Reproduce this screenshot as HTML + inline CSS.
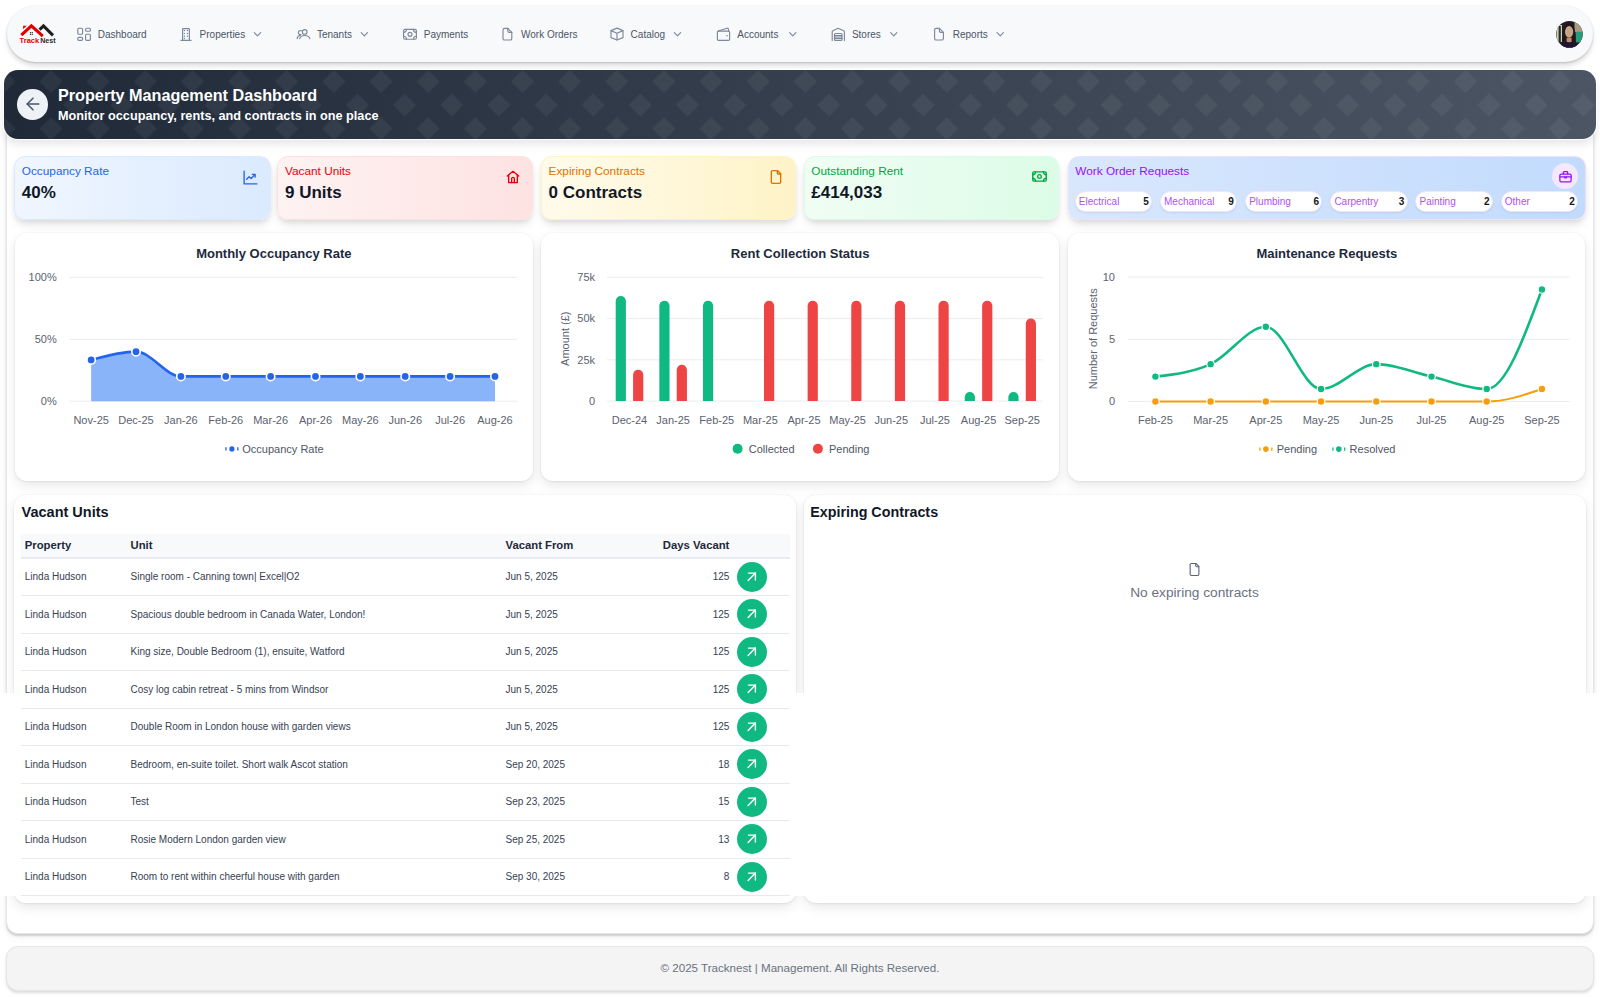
<!DOCTYPE html>
<html><head><meta charset="utf-8"><title>Property Management Dashboard</title>
<style>
*{box-sizing:border-box;margin:0;padding:0}
html,body{width:1600px;height:997px;overflow:hidden;background:#fff;font-family:"Liberation Sans",sans-serif;color:#1f2937}
#nav{position:absolute;left:7px;top:6px;width:1586px;height:56px;border-radius:28px;background:#f8f9fb;box-shadow:0 4px 5px rgba(0,0,0,.13),0 1px 2px rgba(0,0,0,.12),0 0 0 1px rgba(0,0,0,.025)}
#banner{position:absolute;left:4px;top:69.5px;width:1592px;height:69px;border-radius:14px;background:linear-gradient(90deg,#1f2937,#4b5563);overflow:hidden;box-shadow:0 0 0 1px #fff,0 5px 9px rgba(0,0,0,.10)}
#cont{position:absolute;left:6px;top:120px;width:1588px;height:814px;background:#fff;border:1px solid #e6e6e6;border-radius:12px;box-shadow:0 2px 2px rgba(0,0,0,.16),0 3px 8px rgba(0,0,0,.06)}
.card{position:absolute;background:#fff;border-radius:12px;box-shadow:0 5px 12px rgba(0,0,0,.085),0 1px 3px rgba(0,0,0,.05),0 0 0 1px rgba(0,0,0,.018)}
.stat{position:absolute;top:156px;height:63.5px;border-radius:11px;box-shadow:0 6px 10px -2px rgba(0,0,0,.12),0 2px 4px rgba(0,0,0,.05)}
#footer{position:absolute;left:6px;top:946px;width:1588px;height:45px;border-radius:12px;background:#f4f4f4;border:1px solid #e6e6e6;box-shadow:0 2px 3px rgba(0,0,0,.14)}
#mask{position:absolute;left:0;top:693px;width:1600px;height:203px;background:#fff}
.ic{position:absolute;overflow:visible}
</style></head><body>
<div id="nav"></div><div id="cont"></div><div id="banner"><svg width="1592" height="70" style="position:absolute;left:0;top:0">
<defs><pattern id="dia" patternUnits="userSpaceOnUse" width="47.15" height="47.15" x="-0.15" y="11.5"><g fill="rgba(255,255,255,0.055)"><path d="M-11.50 0.00L0.00 -11.50L11.50 0.00L0.00 11.50Z"/><path d="M35.65 0.00L47.15 -11.50L58.65 0.00L47.15 11.50Z"/><path d="M-11.50 47.15L0.00 35.65L11.50 47.15L0.00 58.65Z"/><path d="M35.65 47.15L47.15 35.65L58.65 47.15L47.15 58.65Z"/><path d="M12.07 23.57L23.57 12.07L35.08 23.57L23.57 35.08Z"/></g></pattern></defs>
<rect width="1592" height="70" fill="url(#dia)"/></svg></div><div class="stat" style="left:14px;width:256.5px;background:linear-gradient(90deg,#eff6ff,#dbeafe);border:1px solid #dbeafe"></div><div class="stat" style="left:277.2px;width:255.5px;background:linear-gradient(90deg,#fef2f2,#fee2e2);border:1px solid #fee2e2"></div><div class="stat" style="left:540.8px;width:255.7px;background:linear-gradient(90deg,#fffbeb,#fef3c7);border:1px solid #fef3c7"></div><div class="stat" style="left:803.5px;width:255.6px;background:linear-gradient(90deg,#f0fdf4,#dcfce7);border:1px solid #dcfce7"></div><div class="stat" style="left:1067.5px;width:518px;background:linear-gradient(90deg,#d9e7fd,#c2dbfd);border:1px solid #ede0fb"></div><div class="card" style="left:15px;top:232.5px;width:517.5px;height:248px"></div><div class="card" style="left:541px;top:232.5px;width:518px;height:248px"></div><div class="card" style="left:1067.5px;top:232.5px;width:517.5px;height:248px"></div><div class="card" style="left:14px;top:494.5px;width:781.5px;height:408.5px"></div><div class="card" style="left:803.5px;top:494.5px;width:782px;height:408.5px"></div><div id="footer"></div>
<svg class="ic" style="left:0;top:0" width="70" height="50" viewBox="0 0 70 50">
<path d="M21.3 35.1 L31.4 25.9 L42.8 36.1" fill="none" stroke="#e10000" stroke-width="3.1" stroke-linejoin="miter" stroke-miterlimit="4"/>
<polygon points="23.1,25.8 26.7,25.8 23.1,29.3" fill="#e10000"/>
<path d="M39.6 29.7 L43.5 25.9 L53.0 35.3" fill="none" stroke="#1f1f1f" stroke-width="3.1" stroke-linejoin="miter"/>
<g fill="#3a3a3a"><rect x="29.9" y="32" width="1.2" height="1.2"/><rect x="31.7" y="32" width="1.2" height="1.2"/><rect x="29.9" y="33.8" width="1.2" height="1.2"/><rect x="31.7" y="33.8" width="1.2" height="1.2"/></g>
<text x="19.6" y="42.9" font-size="8" font-weight="700" fill="#e10000" textLength="19.6" lengthAdjust="spacingAndGlyphs">Track</text>
<text x="40.2" y="42.9" font-size="8" font-weight="700" fill="#2b2b2b" textLength="15.4" lengthAdjust="spacingAndGlyphs">Nest</text>
</svg><svg class="ic" style="left:0;top:0" width="1100" height="60" viewBox="0 0 1100 60" fill="none" stroke="#7d889c" stroke-width="1.15" stroke-linecap="round" stroke-linejoin="round"><rect x="77.8" y="28.2" width="4.8" height="6" rx="1"/><rect x="77.8" y="37.4" width="4.8" height="2.9" rx="1"/><rect x="85.6" y="28.2" width="4.8" height="3" rx="1"/><rect x="85.6" y="34.2" width="4.8" height="6.1" rx="1"/><path d="M182.6 40.4 V29.2 Q182.6 28.6 183.2 28.6 H188.8 Q189.4 28.6 189.4 29.2 V40.4"/><path d="M181 40.4 H191"/><g stroke-width="1.5"><path d="M184.4 30.6h.01M187.5 30.6h.01M184.4 33.4h.01M187.5 33.4h.01M184.4 36.2h.01M187.5 36.2h.01M184.4 38.6h.01"/></g><path d="M254.35 32.7 L257.50 35.8 L260.65 32.7"/><circle cx="304.7" cy="31.9" r="2.3"/><path d="M299.7 38.7 Q300.4 35.5 304.7 35.5 Q309 35.5 309.8 38.7"/><path d="M301.3 30.85 A2 2 0 1 0 301.0 34.5"/><path d="M297.1 38.7 Q297.5 35.9 300.4 35.3"/><path d="M361.20 32.7 L364.35 35.8 L367.50 32.7"/><rect x="403.6" y="29.3" width="12.8" height="9.95" rx="1.4"/><circle cx="410" cy="34.3" r="2"/><path d="M403.6 32.4 A3 3 0 0 0 406.6 29.4 M413.4 29.4 A3 3 0 0 0 416.4 32.4 M416.4 36.2 A3 3 0 0 0 413.4 39.2 M406.6 39.2 A3 3 0 0 0 403.6 36.2"/><path d="M507.80 28.4 H504.60 Q503.00 28.4 503.00 30 V38.4 Q503.00 40 504.60 40 H510.20 Q511.80 40 511.80 38.4 V32.4 Z"/><path d="M507.80 28.4 V31.1 Q507.80 32.4 509.10 32.4 H511.80"/><path d="M617 28.1 L623 30.6 V37.6 L617 40 L611 37.6 V30.6 Z"/><path d="M611 30.6 L617 33.2 L623 30.6 M617 33.2 V40"/><path d="M674.35 32.7 L677.50 35.8 L680.65 32.7"/><rect x="717.4" y="31.1" width="12.2" height="9.3" rx="1.2"/><path d="M718.2 31 L727.1 28.2 Q728.2 27.9 728.4 29 L728.6 31"/><path d="M727.0 35.8h.01" stroke-width="1.6"/><path d="M789.60 32.7 L792.75 35.8 L795.90 32.7"/><path d="M832.2 40.6 V31.7 Q832.2 31 832.9 30.7 L838.2 28.3 L843.7 30.7 Q844.4 31 844.4 31.7 V40.6"/><rect x="834.5" y="33.5" width="7.5" height="6.9" rx="1"/><path d="M834.5 35.6 H842 M834.5 38.3 H842"/><rect x="834.5" y="35.6" width="7.5" height="2.7" fill="#717d92" fill-opacity="0.35" stroke="none"/><path d="M890.60 32.7 L893.75 35.8 L896.90 32.7"/><path d="M939.40 28.4 H936.20 Q934.60 28.4 934.60 30 V38.4 Q934.60 40 936.20 40 H941.80 Q943.40 40 943.40 38.4 V32.4 Z"/><path d="M939.40 28.4 V31.1 Q939.40 32.4 940.70 32.4 H943.40"/><path d="M997.10 32.7 L1000.25 35.8 L1003.40 32.7"/></svg><div style="position:absolute;left:97.75px;top:28.14px;font-size:10px;line-height:13px;font-weight:400;color:#4a5565;white-space:nowrap;">Dashboard</div><div style="position:absolute;left:199.60px;top:28.14px;font-size:10px;line-height:13px;font-weight:400;color:#4a5565;white-space:nowrap;">Properties</div><div style="position:absolute;left:316.90px;top:28.14px;font-size:10px;line-height:13px;font-weight:400;color:#4a5565;white-space:nowrap;">Tenants</div><div style="position:absolute;left:423.75px;top:28.14px;font-size:10px;line-height:13px;font-weight:400;color:#4a5565;white-space:nowrap;">Payments</div><div style="position:absolute;left:521.00px;top:28.14px;font-size:10px;line-height:13px;font-weight:400;color:#4a5565;white-space:nowrap;">Work Orders</div><div style="position:absolute;left:630.60px;top:28.14px;font-size:10px;line-height:13px;font-weight:400;color:#4a5565;white-space:nowrap;">Catalog</div><div style="position:absolute;left:737.25px;top:28.14px;font-size:10px;line-height:13px;font-weight:400;color:#4a5565;white-space:nowrap;">Accounts</div><div style="position:absolute;left:851.90px;top:28.14px;font-size:10px;line-height:13px;font-weight:400;color:#4a5565;white-space:nowrap;">Stores</div><div style="position:absolute;left:952.75px;top:28.14px;font-size:10px;line-height:13px;font-weight:400;color:#4a5565;white-space:nowrap;">Reports</div><svg class="ic" style="left:1554px;top:19px" width="31" height="31" viewBox="0 0 31 31">
<defs><clipPath id="av"><circle cx="15.4" cy="15.25" r="13.3"/></clipPath></defs>
<circle cx="15.4" cy="15.25" r="14.1" fill="#fff"/>
<g clip-path="url(#av)">
<rect width="31" height="31" fill="#241d2a"/>
<rect x="2.5" y="6" width="5.5" height="17" fill="#cfd0b0"/>
<rect x="4.6" y="7" width="2.2" height="16" fill="#233030"/>
<rect x="20.5" y="2" width="10" height="11" fill="#a89a80"/>
<rect x="21.5" y="12.8" width="9" height="10.5" fill="#2a9c7e"/>
<path d="M8.5 31 C8.5 12 9.5 3.5 15 3.5 C20.5 3.5 22 12 22 31Z" fill="#21171d"/>
<ellipse cx="15.1" cy="12.9" rx="4.1" ry="5.9" fill="#c9a587"/>
<path d="M12.6 18.8 h5 v4 q-2.5 1.5 -5 0z" fill="#c08a6c"/>
<path d="M3 31 C6 24 10 23.5 15 23.5 C20 23.5 24 24 27 31Z" fill="#1c1632"/>
</g></svg><div style="position:absolute;left:17.2px;top:89px;width:30.6px;height:30.6px;border-radius:50%;background:#eef2f7"></div><svg class="ic" style="left:22.60px;top:94.30px" width="20" height="20" viewBox="0 0 24 24" fill="none" stroke="#475569" stroke-width="1.8" stroke-linecap="round" stroke-linejoin="round" ><path d="m12 19-7-7 7-7"/><path d="M19 12H5"/></svg><div style="position:absolute;left:58.00px;top:84.59px;font-size:16.2px;line-height:21px;font-weight:700;color:#fff;white-space:nowrap;">Property Management Dashboard</div><div style="position:absolute;left:58.00px;top:108.10px;font-size:12.7px;line-height:17px;font-weight:700;color:#fff;white-space:nowrap;">Monitor occupancy, rents, and contracts in one place</div><div style="position:absolute;left:21.80px;top:163.71px;font-size:11.8px;line-height:15px;font-weight:400;color:#2563eb;white-space:nowrap;">Occupancy Rate</div><div style="position:absolute;left:21.80px;top:181.81px;font-size:17px;line-height:22px;font-weight:700;color:#101828;white-space:nowrap;">40%</div><svg class="ic" style="left:241.50px;top:168.50px" width="17" height="17" viewBox="0 0 24 24" fill="none" stroke="#2563eb" stroke-width="1.9" stroke-linecap="round" stroke-linejoin="round" ><path d="M3 3v18h18"/><path d="m6.5 14.5 3.5-3.5 3 2.5 5-5.5"/><path d="M14.5 7.5h4v4"/></svg><div style="position:absolute;left:285.00px;top:163.71px;font-size:11.8px;line-height:15px;font-weight:400;color:#e7000b;white-space:nowrap;">Vacant Units</div><div style="position:absolute;left:285.00px;top:181.81px;font-size:17px;line-height:22px;font-weight:700;color:#101828;white-space:nowrap;">9 Units</div><svg class="ic" style="left:504.50px;top:168.80px" width="16" height="16" viewBox="0 0 24 24" fill="none" stroke="#e7000b" stroke-width="2" stroke-linecap="round" stroke-linejoin="round" ><path d="M3.5 10.5 12 3.5l8.5 7"/><path d="M5.5 9v11.5h13V9"/><path d="M10 20.5v-6a2 2 0 0 1 4 0v6"/></svg><div style="position:absolute;left:548.60px;top:163.71px;font-size:11.8px;line-height:15px;font-weight:400;color:#e17100;white-space:nowrap;">Expiring Contracts</div><div style="position:absolute;left:548.60px;top:181.81px;font-size:17px;line-height:22px;font-weight:700;color:#101828;white-space:nowrap;">0 Contracts</div><svg class="ic" style="left:767.50px;top:168.80px" width="16" height="16" viewBox="0 0 24 24" fill="none" stroke="#e17100" stroke-width="2" stroke-linecap="round" stroke-linejoin="round" ><path d="M14.5 2.5H7a2 2 0 0 0-2 2v15a2 2 0 0 0 2 2h10a2 2 0 0 0 2-2V7Z"/><path d="M14 2.5v3.5a1.5 1.5 0 0 0 1.5 1.5H19"/></svg><div style="position:absolute;left:811.30px;top:163.71px;font-size:11.8px;line-height:15px;font-weight:400;color:#00a63e;white-space:nowrap;">Outstanding Rent</div><div style="position:absolute;left:811.30px;top:181.81px;font-size:17px;line-height:22px;font-weight:700;color:#101828;white-space:nowrap;">£414,033</div><svg class="ic" style="left:1030.50px;top:168.20px" width="17" height="17" viewBox="0 0 24 24" fill="none" stroke="#00a63e" stroke-width="1.9" stroke-linecap="round" stroke-linejoin="round" ><rect x="2.5" y="5.5" width="19" height="13" rx="1.5"/><circle cx="12" cy="12" r="2.6"/><path d="M2.5 9.5a4 4 0 0 0 4-4M17.5 5.5a4 4 0 0 0 4 4M2.5 14.5a4 4 0 0 1 4 4M17.5 18.5a4 4 0 0 1 4-4"/></svg><div style="position:absolute;left:1075.30px;top:163.71px;font-size:11.8px;line-height:15px;font-weight:400;color:#9810fa;white-space:nowrap;">Work Order Requests</div><div style="position:absolute;left:1552px;top:163.4px;width:26px;height:26px;border-radius:50%;background:#f3e8ff"></div><svg class="ic" style="left:1557.50px;top:168.90px" width="15" height="15" viewBox="0 0 24 24" fill="none" stroke="#9810fa" stroke-width="2" stroke-linecap="round" stroke-linejoin="round" ><rect x="3" y="8" width="18" height="12.5" rx="2"/><path d="M8.5 8V5.5a1.5 1.5 0 0 1 1.5-1.5h4a1.5 1.5 0 0 1 1.5 1.5V8"/><path d="M3 12.5h18"/><path d="M10.5 12.5v1.5h3v-1.5"/></svg><div style="position:absolute;left:1074.50px;top:190.6px;width:77.6px;height:21.2px;border-radius:11px;background:#fff;border:1px solid #f1e6fd;box-shadow:0 1px 2px rgba(0,0,0,.08)"></div><div style="position:absolute;left:1078.80px;top:194.63px;font-size:10px;line-height:13px;font-weight:400;color:#b150f5;white-space:nowrap;">Electrical</div><div style="position:absolute;left:548.70px;width:600px;text-align:right;top:194.63px;font-size:10px;line-height:13px;font-weight:700;color:#101828;white-space:nowrap;">5</div><div style="position:absolute;left:1159.70px;top:190.6px;width:77.6px;height:21.2px;border-radius:11px;background:#fff;border:1px solid #f1e6fd;box-shadow:0 1px 2px rgba(0,0,0,.08)"></div><div style="position:absolute;left:1164.00px;top:194.63px;font-size:10px;line-height:13px;font-weight:400;color:#b150f5;white-space:nowrap;">Mechanical</div><div style="position:absolute;left:633.90px;width:600px;text-align:right;top:194.63px;font-size:10px;line-height:13px;font-weight:700;color:#101828;white-space:nowrap;">9</div><div style="position:absolute;left:1244.90px;top:190.6px;width:77.6px;height:21.2px;border-radius:11px;background:#fff;border:1px solid #f1e6fd;box-shadow:0 1px 2px rgba(0,0,0,.08)"></div><div style="position:absolute;left:1249.20px;top:194.63px;font-size:10px;line-height:13px;font-weight:400;color:#b150f5;white-space:nowrap;">Plumbing</div><div style="position:absolute;left:719.10px;width:600px;text-align:right;top:194.63px;font-size:10px;line-height:13px;font-weight:700;color:#101828;white-space:nowrap;">6</div><div style="position:absolute;left:1330.10px;top:190.6px;width:77.6px;height:21.2px;border-radius:11px;background:#fff;border:1px solid #f1e6fd;box-shadow:0 1px 2px rgba(0,0,0,.08)"></div><div style="position:absolute;left:1334.40px;top:194.63px;font-size:10px;line-height:13px;font-weight:400;color:#b150f5;white-space:nowrap;">Carpentry</div><div style="position:absolute;left:804.30px;width:600px;text-align:right;top:194.63px;font-size:10px;line-height:13px;font-weight:700;color:#101828;white-space:nowrap;">3</div><div style="position:absolute;left:1415.30px;top:190.6px;width:77.6px;height:21.2px;border-radius:11px;background:#fff;border:1px solid #f1e6fd;box-shadow:0 1px 2px rgba(0,0,0,.08)"></div><div style="position:absolute;left:1419.60px;top:194.63px;font-size:10px;line-height:13px;font-weight:400;color:#b150f5;white-space:nowrap;">Painting</div><div style="position:absolute;left:889.50px;width:600px;text-align:right;top:194.63px;font-size:10px;line-height:13px;font-weight:700;color:#101828;white-space:nowrap;">2</div><div style="position:absolute;left:1500.50px;top:190.6px;width:77.6px;height:21.2px;border-radius:11px;background:#fff;border:1px solid #f1e6fd;box-shadow:0 1px 2px rgba(0,0,0,.08)"></div><div style="position:absolute;left:1504.80px;top:194.63px;font-size:10px;line-height:13px;font-weight:400;color:#b150f5;white-space:nowrap;">Other</div><div style="position:absolute;left:974.70px;width:600px;text-align:right;top:194.63px;font-size:10px;line-height:13px;font-weight:700;color:#101828;white-space:nowrap;">2</div>
<svg style="position:absolute;left:0;top:0" width="1600" height="997" viewBox="0 0 1600 997" font-family='"Liberation Sans", sans-serif'>
<text x="273.80" y="258.20" font-size="13" font-weight="700" fill="#1e293b" text-anchor="middle" >Monthly Occupancy Rate</text><line x1="69.2" x2="517" y1="277.3" y2="277.3" stroke="#ececec" stroke-width="1"/><line x1="69.2" x2="517" y1="339.25" y2="339.25" stroke="#ececec" stroke-width="1"/><line x1="69.2" x2="517" y1="401.2" y2="401.2" stroke="#ececec" stroke-width="1"/><text x="56.70" y="281.20" font-size="11" font-weight="400" fill="#5b6270" text-anchor="end" >100%</text><text x="56.70" y="343.15" font-size="11" font-weight="400" fill="#5b6270" text-anchor="end" >50%</text><text x="56.70" y="405.10" font-size="11" font-weight="400" fill="#5b6270" text-anchor="end" >0%</text><text x="91.15" y="423.50" font-size="11" font-weight="400" fill="#5b6270" text-anchor="middle" >Nov-25</text><text x="136.02" y="423.50" font-size="11" font-weight="400" fill="#5b6270" text-anchor="middle" >Dec-25</text><text x="180.89" y="423.50" font-size="11" font-weight="400" fill="#5b6270" text-anchor="middle" >Jan-26</text><text x="225.76" y="423.50" font-size="11" font-weight="400" fill="#5b6270" text-anchor="middle" >Feb-26</text><text x="270.63" y="423.50" font-size="11" font-weight="400" fill="#5b6270" text-anchor="middle" >Mar-26</text><text x="315.50" y="423.50" font-size="11" font-weight="400" fill="#5b6270" text-anchor="middle" >Apr-26</text><text x="360.37" y="423.50" font-size="11" font-weight="400" fill="#5b6270" text-anchor="middle" >May-26</text><text x="405.24" y="423.50" font-size="11" font-weight="400" fill="#5b6270" text-anchor="middle" >Jun-26</text><text x="450.11" y="423.50" font-size="11" font-weight="400" fill="#5b6270" text-anchor="middle" >Jul-26</text><text x="494.98" y="423.50" font-size="11" font-weight="400" fill="#5b6270" text-anchor="middle" >Aug-26</text><path d="M91.15,359.94 C106.11,355.79 121.06,351.64 136.02,351.64 C150.98,351.64 165.93,376.42 180.89,376.42 C195.85,376.42 210.80,376.42 225.76,376.42 C240.72,376.42 255.67,376.42 270.63,376.42 C285.59,376.42 300.54,376.42 315.50,376.42 C330.46,376.42 345.41,376.42 360.37,376.42 C375.33,376.42 390.28,376.42 405.24,376.42 C420.20,376.42 435.15,376.42 450.11,376.42 C465.07,376.42 480.02,376.42 494.98,376.42 L494.98,401.2 L91.15,401.2 Z" fill="#3b82f6" fill-opacity="0.6"/><path d="M91.15,359.94 C106.11,355.79 121.06,351.64 136.02,351.64 C150.98,351.64 165.93,376.42 180.89,376.42 C195.85,376.42 210.80,376.42 225.76,376.42 C240.72,376.42 255.67,376.42 270.63,376.42 C285.59,376.42 300.54,376.42 315.50,376.42 C330.46,376.42 345.41,376.42 360.37,376.42 C375.33,376.42 390.28,376.42 405.24,376.42 C420.20,376.42 435.15,376.42 450.11,376.42 C465.07,376.42 480.02,376.42 494.98,376.42" fill="none" stroke="#2563eb" stroke-width="2.6"/><circle cx="91.15" cy="359.94" r="4.2" fill="#2563eb" stroke="#fff" stroke-width="1.6"/><circle cx="136.02" cy="351.64" r="4.2" fill="#2563eb" stroke="#fff" stroke-width="1.6"/><circle cx="180.89" cy="376.42" r="4.2" fill="#2563eb" stroke="#fff" stroke-width="1.6"/><circle cx="225.76" cy="376.42" r="4.2" fill="#2563eb" stroke="#fff" stroke-width="1.6"/><circle cx="270.63" cy="376.42" r="4.2" fill="#2563eb" stroke="#fff" stroke-width="1.6"/><circle cx="315.50" cy="376.42" r="4.2" fill="#2563eb" stroke="#fff" stroke-width="1.6"/><circle cx="360.37" cy="376.42" r="4.2" fill="#2563eb" stroke="#fff" stroke-width="1.6"/><circle cx="405.24" cy="376.42" r="4.2" fill="#2563eb" stroke="#fff" stroke-width="1.6"/><circle cx="450.11" cy="376.42" r="4.2" fill="#2563eb" stroke="#fff" stroke-width="1.6"/><circle cx="494.98" cy="376.42" r="4.2" fill="#2563eb" stroke="#fff" stroke-width="1.6"/><circle cx="231.9" cy="448.9" r="2.6" fill="#2563eb"/><path d="M226.13 447.25 A6.0 6.0 0 0 0 226.13 450.55 M237.67 447.25 A6.0 6.0 0 0 1 237.67 450.55" fill="none" stroke="#2563eb" stroke-width="1.3"/><text x="242.30" y="452.70" font-size="11" font-weight="400" fill="#4f5663" text-anchor="start" >Occupancy Rate</text><text x="800.20" y="258.20" font-size="13" font-weight="700" fill="#1e293b" text-anchor="middle" >Rent Collection Status</text><line x1="607" x2="1043.2" y1="277.3" y2="277.3" stroke="#ececec" stroke-width="1"/><line x1="607" x2="1043.2" y1="318.57" y2="318.57" stroke="#ececec" stroke-width="1"/><line x1="607" x2="1043.2" y1="359.83" y2="359.83" stroke="#ececec" stroke-width="1"/><line x1="607" x2="1043.2" y1="401.1" y2="401.1" stroke="#ececec" stroke-width="1"/><text x="595.10" y="281.20" font-size="11" font-weight="400" fill="#5b6270" text-anchor="end" >75k</text><text x="595.10" y="322.47" font-size="11" font-weight="400" fill="#5b6270" text-anchor="end" >50k</text><text x="595.10" y="363.73" font-size="11" font-weight="400" fill="#5b6270" text-anchor="end" >25k</text><text x="595.10" y="405.00" font-size="11" font-weight="400" fill="#5b6270" text-anchor="end" >0</text><text x="0.00" y="0.00" font-size="11" font-weight="400" fill="#5b6270" text-anchor="middle" transform="translate(568.6 338.7) rotate(-90)">Amount (£)</text><text x="629.50" y="423.50" font-size="11" font-weight="400" fill="#5b6270" text-anchor="middle" >Dec-24</text><path d="M615.70,401.1 L615.70,301.05 A5.1,5.1 0 0 1 625.90,301.05 L625.90,401.1 Z" fill="#10b981"/><path d="M633.10,401.1 L633.10,374.84 A5.1,5.1 0 0 1 643.30,374.84 L643.30,401.1 Z" fill="#ef4444"/><text x="673.13" y="423.50" font-size="11" font-weight="400" fill="#5b6270" text-anchor="middle" >Jan-25</text><path d="M659.33,401.1 L659.33,305.84 A5.1,5.1 0 0 1 669.53,305.84 L669.53,401.1 Z" fill="#10b981"/><path d="M676.73,401.1 L676.73,369.80 A5.1,5.1 0 0 1 686.93,369.80 L686.93,401.1 Z" fill="#ef4444"/><text x="716.76" y="423.50" font-size="11" font-weight="400" fill="#5b6270" text-anchor="middle" >Feb-25</text><path d="M702.96,401.1 L702.96,305.84 A5.1,5.1 0 0 1 713.16,305.84 L713.16,401.1 Z" fill="#10b981"/><text x="760.39" y="423.50" font-size="11" font-weight="400" fill="#5b6270" text-anchor="middle" >Mar-25</text><path d="M763.99,401.1 L763.99,305.84 A5.1,5.1 0 0 1 774.19,305.84 L774.19,401.1 Z" fill="#ef4444"/><text x="804.02" y="423.50" font-size="11" font-weight="400" fill="#5b6270" text-anchor="middle" >Apr-25</text><path d="M807.62,401.1 L807.62,305.84 A5.1,5.1 0 0 1 817.82,305.84 L817.82,401.1 Z" fill="#ef4444"/><text x="847.65" y="423.50" font-size="11" font-weight="400" fill="#5b6270" text-anchor="middle" >May-25</text><path d="M851.25,401.1 L851.25,305.84 A5.1,5.1 0 0 1 861.45,305.84 L861.45,401.1 Z" fill="#ef4444"/><text x="891.28" y="423.50" font-size="11" font-weight="400" fill="#5b6270" text-anchor="middle" >Jun-25</text><path d="M894.88,401.1 L894.88,305.84 A5.1,5.1 0 0 1 905.08,305.84 L905.08,401.1 Z" fill="#ef4444"/><text x="934.91" y="423.50" font-size="11" font-weight="400" fill="#5b6270" text-anchor="middle" >Jul-25</text><path d="M938.51,401.1 L938.51,305.84 A5.1,5.1 0 0 1 948.71,305.84 L948.71,401.1 Z" fill="#ef4444"/><text x="978.54" y="423.50" font-size="11" font-weight="400" fill="#5b6270" text-anchor="middle" >Aug-25</text><path d="M964.74,401.1 L964.74,397.12 A5.1,5.1 0 0 1 974.94,397.12 L974.94,401.1 Z" fill="#10b981"/><path d="M982.14,401.1 L982.14,305.84 A5.1,5.1 0 0 1 992.34,305.84 L992.34,401.1 Z" fill="#ef4444"/><text x="1022.17" y="423.50" font-size="11" font-weight="400" fill="#5b6270" text-anchor="middle" >Sep-25</text><path d="M1008.37,401.1 L1008.37,397.12 A5.1,5.1 0 0 1 1018.57,397.12 L1018.57,401.1 Z" fill="#10b981"/><path d="M1025.77,401.1 L1025.77,323.67 A5.1,5.1 0 0 1 1035.97,323.67 L1035.97,401.1 Z" fill="#ef4444"/><circle cx="737.6" cy="448.8" r="5" fill="#10b981"/><text x="748.70" y="452.70" font-size="11" font-weight="400" fill="#4f5663" text-anchor="start" >Collected</text><circle cx="817.9" cy="448.8" r="5" fill="#ef4444"/><text x="829.00" y="452.70" font-size="11" font-weight="400" fill="#4f5663" text-anchor="start" >Pending</text><text x="1326.90" y="258.20" font-size="13" font-weight="700" fill="#1e293b" text-anchor="middle" >Maintenance Requests</text><line x1="1127.7" x2="1569.6" y1="277.0" y2="277.0" stroke="#ececec" stroke-width="1"/><line x1="1127.7" x2="1569.6" y1="339.25" y2="339.25" stroke="#ececec" stroke-width="1"/><line x1="1127.7" x2="1569.6" y1="401.5" y2="401.5" stroke="#ececec" stroke-width="1"/><text x="1115.00" y="280.90" font-size="11" font-weight="400" fill="#5b6270" text-anchor="end" >10</text><text x="1115.00" y="343.15" font-size="11" font-weight="400" fill="#5b6270" text-anchor="end" >5</text><text x="1115.00" y="405.40" font-size="11" font-weight="400" fill="#5b6270" text-anchor="end" >0</text><text x="0.00" y="0.00" font-size="11" font-weight="400" fill="#5b6270" text-anchor="middle" transform="translate(1096.6 338.8) rotate(-90)">Number of Requests</text><text x="1155.40" y="423.50" font-size="11" font-weight="400" fill="#5b6270" text-anchor="middle" >Feb-25</text><text x="1210.62" y="423.50" font-size="11" font-weight="400" fill="#5b6270" text-anchor="middle" >Mar-25</text><text x="1265.84" y="423.50" font-size="11" font-weight="400" fill="#5b6270" text-anchor="middle" >Apr-25</text><text x="1321.06" y="423.50" font-size="11" font-weight="400" fill="#5b6270" text-anchor="middle" >May-25</text><text x="1376.28" y="423.50" font-size="11" font-weight="400" fill="#5b6270" text-anchor="middle" >Jun-25</text><text x="1431.50" y="423.50" font-size="11" font-weight="400" fill="#5b6270" text-anchor="middle" >Jul-25</text><text x="1486.72" y="423.50" font-size="11" font-weight="400" fill="#5b6270" text-anchor="middle" >Aug-25</text><text x="1541.94" y="423.50" font-size="11" font-weight="400" fill="#5b6270" text-anchor="middle" >Sep-25</text><path d="M1155.40,401.50 C1173.81,401.50 1192.21,401.50 1210.62,401.50 C1229.03,401.50 1247.43,401.50 1265.84,401.50 C1284.25,401.50 1302.65,401.50 1321.06,401.50 C1339.47,401.50 1357.87,401.50 1376.28,401.50 C1394.69,401.50 1413.09,401.50 1431.50,401.50 C1449.91,401.50 1468.31,401.50 1486.72,401.50 C1505.13,401.50 1523.53,395.28 1541.94,389.05" fill="none" stroke="#f59e0b" stroke-width="2.0"/><path d="M1155.40,376.60 C1173.81,374.52 1192.21,372.45 1210.62,364.15 C1229.03,355.85 1247.43,326.80 1265.84,326.80 C1284.25,326.80 1302.65,389.05 1321.06,389.05 C1339.47,389.05 1357.87,364.15 1376.28,364.15 C1394.69,364.15 1413.09,372.45 1431.50,376.60 C1449.91,380.75 1468.31,389.05 1486.72,389.05 C1505.13,389.05 1523.53,339.25 1541.94,289.45" fill="none" stroke="#10b981" stroke-width="2.6"/><circle cx="1155.40" cy="401.50" r="3.8" fill="#f59e0b" stroke="#fff" stroke-width="1.2"/><circle cx="1210.62" cy="401.50" r="3.8" fill="#f59e0b" stroke="#fff" stroke-width="1.2"/><circle cx="1265.84" cy="401.50" r="3.8" fill="#f59e0b" stroke="#fff" stroke-width="1.2"/><circle cx="1321.06" cy="401.50" r="3.8" fill="#f59e0b" stroke="#fff" stroke-width="1.2"/><circle cx="1376.28" cy="401.50" r="3.8" fill="#f59e0b" stroke="#fff" stroke-width="1.2"/><circle cx="1431.50" cy="401.50" r="3.8" fill="#f59e0b" stroke="#fff" stroke-width="1.2"/><circle cx="1486.72" cy="401.50" r="3.8" fill="#f59e0b" stroke="#fff" stroke-width="1.2"/><circle cx="1541.94" cy="389.05" r="3.8" fill="#f59e0b" stroke="#fff" stroke-width="1.2"/><circle cx="1155.40" cy="376.60" r="3.8" fill="#10b981" stroke="#fff" stroke-width="1.2"/><circle cx="1210.62" cy="364.15" r="3.8" fill="#10b981" stroke="#fff" stroke-width="1.2"/><circle cx="1265.84" cy="326.80" r="3.8" fill="#10b981" stroke="#fff" stroke-width="1.2"/><circle cx="1321.06" cy="389.05" r="3.8" fill="#10b981" stroke="#fff" stroke-width="1.2"/><circle cx="1376.28" cy="364.15" r="3.8" fill="#10b981" stroke="#fff" stroke-width="1.2"/><circle cx="1431.50" cy="376.60" r="3.8" fill="#10b981" stroke="#fff" stroke-width="1.2"/><circle cx="1486.72" cy="389.05" r="3.8" fill="#10b981" stroke="#fff" stroke-width="1.2"/><circle cx="1541.94" cy="289.45" r="3.8" fill="#10b981" stroke="#fff" stroke-width="1.2"/><circle cx="1265.9" cy="449.1" r="2.8" fill="#f59e0b"/><path d="M1260.13 447.45 A6.0 6.0 0 0 0 1260.13 450.75 M1271.67 447.45 A6.0 6.0 0 0 1 1271.67 450.75" fill="none" stroke="#f59e0b" stroke-width="1.3"/><text x="1276.70" y="452.70" font-size="11" font-weight="400" fill="#4f5663" text-anchor="start" >Pending</text><circle cx="1338.8" cy="449.1" r="2.8" fill="#10b981"/><path d="M1333.03 447.45 A6.0 6.0 0 0 0 1333.03 450.75 M1344.57 447.45 A6.0 6.0 0 0 1 1344.57 450.75" fill="none" stroke="#10b981" stroke-width="1.3"/><text x="1349.60" y="452.70" font-size="11" font-weight="400" fill="#4f5663" text-anchor="start" >Resolved</text>
</svg>
<div id="mask"></div><div style="position:absolute;left:21.60px;top:503.28px;font-size:14.5px;line-height:19px;font-weight:700;color:#101828;white-space:nowrap;">Vacant Units</div><div style="position:absolute;left:21px;top:534px;width:769px;height:24.5px;background:#f8f9fa;border-bottom:2px solid #e8ebf0"></div><div style="position:absolute;left:24.75px;top:538.18px;font-size:11.3px;line-height:15px;font-weight:700;color:#1e293b;white-space:nowrap;">Property</div><div style="position:absolute;left:130.50px;top:538.18px;font-size:11.3px;line-height:15px;font-weight:700;color:#1e293b;white-space:nowrap;">Unit</div><div style="position:absolute;left:505.50px;top:538.18px;font-size:11.3px;line-height:15px;font-weight:700;color:#1e293b;white-space:nowrap;">Vacant From</div><div style="position:absolute;left:129.40px;width:600px;text-align:right;top:538.18px;font-size:11.3px;line-height:15px;font-weight:700;color:#1e293b;white-space:nowrap;">Days Vacant</div><div style="position:absolute;left:24.75px;top:570.49px;font-size:10px;line-height:13px;font-weight:400;color:#364153;white-space:nowrap;">Linda Hudson</div><div style="position:absolute;left:130.50px;top:570.49px;font-size:10px;line-height:13px;font-weight:400;color:#364153;white-space:nowrap;">Single room - Canning town| Excel|O2</div><div style="position:absolute;left:505.50px;top:570.49px;font-size:10px;line-height:13px;font-weight:400;color:#364153;white-space:nowrap;">Jun 5, 2025</div><div style="position:absolute;left:129.40px;width:600px;text-align:right;top:570.49px;font-size:10px;line-height:13px;font-weight:400;color:#364153;white-space:nowrap;">125</div><div style="position:absolute;left:736.80px;top:561.75px;width:30px;height:30px;border-radius:50%;background:#10b981"></div><svg class="ic" style="left:743.20px;top:567.85px" width="17.5" height="17.5" viewBox="0 0 24 24" fill="none" stroke="#fff" stroke-width="1.9" stroke-linecap="round" stroke-linejoin="round" ><path d="M7 17 17 7"/><path d="M7.5 7h9.5v9.5"/></svg><div style="position:absolute;left:21px;top:595.00px;width:769px;height:1px;background:#e5e9f0"></div><div style="position:absolute;left:24.75px;top:607.99px;font-size:10px;line-height:13px;font-weight:400;color:#364153;white-space:nowrap;">Linda Hudson</div><div style="position:absolute;left:130.50px;top:607.99px;font-size:10px;line-height:13px;font-weight:400;color:#364153;white-space:nowrap;">Spacious double bedroom in Canada Water, London!</div><div style="position:absolute;left:505.50px;top:607.99px;font-size:10px;line-height:13px;font-weight:400;color:#364153;white-space:nowrap;">Jun 5, 2025</div><div style="position:absolute;left:129.40px;width:600px;text-align:right;top:607.99px;font-size:10px;line-height:13px;font-weight:400;color:#364153;white-space:nowrap;">125</div><div style="position:absolute;left:736.80px;top:599.25px;width:30px;height:30px;border-radius:50%;background:#10b981"></div><svg class="ic" style="left:743.20px;top:605.35px" width="17.5" height="17.5" viewBox="0 0 24 24" fill="none" stroke="#fff" stroke-width="1.9" stroke-linecap="round" stroke-linejoin="round" ><path d="M7 17 17 7"/><path d="M7.5 7h9.5v9.5"/></svg><div style="position:absolute;left:21px;top:632.50px;width:769px;height:1px;background:#e5e9f0"></div><div style="position:absolute;left:24.75px;top:645.49px;font-size:10px;line-height:13px;font-weight:400;color:#364153;white-space:nowrap;">Linda Hudson</div><div style="position:absolute;left:130.50px;top:645.49px;font-size:10px;line-height:13px;font-weight:400;color:#364153;white-space:nowrap;">King size, Double Bedroom (1), ensuite, Watford</div><div style="position:absolute;left:505.50px;top:645.49px;font-size:10px;line-height:13px;font-weight:400;color:#364153;white-space:nowrap;">Jun 5, 2025</div><div style="position:absolute;left:129.40px;width:600px;text-align:right;top:645.49px;font-size:10px;line-height:13px;font-weight:400;color:#364153;white-space:nowrap;">125</div><div style="position:absolute;left:736.80px;top:636.75px;width:30px;height:30px;border-radius:50%;background:#10b981"></div><svg class="ic" style="left:743.20px;top:642.85px" width="17.5" height="17.5" viewBox="0 0 24 24" fill="none" stroke="#fff" stroke-width="1.9" stroke-linecap="round" stroke-linejoin="round" ><path d="M7 17 17 7"/><path d="M7.5 7h9.5v9.5"/></svg><div style="position:absolute;left:21px;top:670.00px;width:769px;height:1px;background:#e5e9f0"></div><div style="position:absolute;left:24.75px;top:682.99px;font-size:10px;line-height:13px;font-weight:400;color:#364153;white-space:nowrap;">Linda Hudson</div><div style="position:absolute;left:130.50px;top:682.99px;font-size:10px;line-height:13px;font-weight:400;color:#364153;white-space:nowrap;">Cosy log cabin retreat - 5 mins from Windsor</div><div style="position:absolute;left:505.50px;top:682.99px;font-size:10px;line-height:13px;font-weight:400;color:#364153;white-space:nowrap;">Jun 5, 2025</div><div style="position:absolute;left:129.40px;width:600px;text-align:right;top:682.99px;font-size:10px;line-height:13px;font-weight:400;color:#364153;white-space:nowrap;">125</div><div style="position:absolute;left:736.80px;top:674.25px;width:30px;height:30px;border-radius:50%;background:#10b981"></div><svg class="ic" style="left:743.20px;top:680.35px" width="17.5" height="17.5" viewBox="0 0 24 24" fill="none" stroke="#fff" stroke-width="1.9" stroke-linecap="round" stroke-linejoin="round" ><path d="M7 17 17 7"/><path d="M7.5 7h9.5v9.5"/></svg><div style="position:absolute;left:21px;top:707.50px;width:769px;height:1px;background:#e5e9f0"></div><div style="position:absolute;left:24.75px;top:720.49px;font-size:10px;line-height:13px;font-weight:400;color:#364153;white-space:nowrap;">Linda Hudson</div><div style="position:absolute;left:130.50px;top:720.49px;font-size:10px;line-height:13px;font-weight:400;color:#364153;white-space:nowrap;">Double Room in London house with garden views</div><div style="position:absolute;left:505.50px;top:720.49px;font-size:10px;line-height:13px;font-weight:400;color:#364153;white-space:nowrap;">Jun 5, 2025</div><div style="position:absolute;left:129.40px;width:600px;text-align:right;top:720.49px;font-size:10px;line-height:13px;font-weight:400;color:#364153;white-space:nowrap;">125</div><div style="position:absolute;left:736.80px;top:711.75px;width:30px;height:30px;border-radius:50%;background:#10b981"></div><svg class="ic" style="left:743.20px;top:717.85px" width="17.5" height="17.5" viewBox="0 0 24 24" fill="none" stroke="#fff" stroke-width="1.9" stroke-linecap="round" stroke-linejoin="round" ><path d="M7 17 17 7"/><path d="M7.5 7h9.5v9.5"/></svg><div style="position:absolute;left:21px;top:745.00px;width:769px;height:1px;background:#e5e9f0"></div><div style="position:absolute;left:24.75px;top:757.99px;font-size:10px;line-height:13px;font-weight:400;color:#364153;white-space:nowrap;">Linda Hudson</div><div style="position:absolute;left:130.50px;top:757.99px;font-size:10px;line-height:13px;font-weight:400;color:#364153;white-space:nowrap;">Bedroom, en-suite toilet. Short walk Ascot station</div><div style="position:absolute;left:505.50px;top:757.99px;font-size:10px;line-height:13px;font-weight:400;color:#364153;white-space:nowrap;">Sep 20, 2025</div><div style="position:absolute;left:129.40px;width:600px;text-align:right;top:757.99px;font-size:10px;line-height:13px;font-weight:400;color:#364153;white-space:nowrap;">18</div><div style="position:absolute;left:736.80px;top:749.25px;width:30px;height:30px;border-radius:50%;background:#10b981"></div><svg class="ic" style="left:743.20px;top:755.35px" width="17.5" height="17.5" viewBox="0 0 24 24" fill="none" stroke="#fff" stroke-width="1.9" stroke-linecap="round" stroke-linejoin="round" ><path d="M7 17 17 7"/><path d="M7.5 7h9.5v9.5"/></svg><div style="position:absolute;left:21px;top:782.50px;width:769px;height:1px;background:#e5e9f0"></div><div style="position:absolute;left:24.75px;top:795.49px;font-size:10px;line-height:13px;font-weight:400;color:#364153;white-space:nowrap;">Linda Hudson</div><div style="position:absolute;left:130.50px;top:795.49px;font-size:10px;line-height:13px;font-weight:400;color:#364153;white-space:nowrap;">Test</div><div style="position:absolute;left:505.50px;top:795.49px;font-size:10px;line-height:13px;font-weight:400;color:#364153;white-space:nowrap;">Sep 23, 2025</div><div style="position:absolute;left:129.40px;width:600px;text-align:right;top:795.49px;font-size:10px;line-height:13px;font-weight:400;color:#364153;white-space:nowrap;">15</div><div style="position:absolute;left:736.80px;top:786.75px;width:30px;height:30px;border-radius:50%;background:#10b981"></div><svg class="ic" style="left:743.20px;top:792.85px" width="17.5" height="17.5" viewBox="0 0 24 24" fill="none" stroke="#fff" stroke-width="1.9" stroke-linecap="round" stroke-linejoin="round" ><path d="M7 17 17 7"/><path d="M7.5 7h9.5v9.5"/></svg><div style="position:absolute;left:21px;top:820.00px;width:769px;height:1px;background:#e5e9f0"></div><div style="position:absolute;left:24.75px;top:832.99px;font-size:10px;line-height:13px;font-weight:400;color:#364153;white-space:nowrap;">Linda Hudson</div><div style="position:absolute;left:130.50px;top:832.99px;font-size:10px;line-height:13px;font-weight:400;color:#364153;white-space:nowrap;">Rosie Modern London garden view</div><div style="position:absolute;left:505.50px;top:832.99px;font-size:10px;line-height:13px;font-weight:400;color:#364153;white-space:nowrap;">Sep 25, 2025</div><div style="position:absolute;left:129.40px;width:600px;text-align:right;top:832.99px;font-size:10px;line-height:13px;font-weight:400;color:#364153;white-space:nowrap;">13</div><div style="position:absolute;left:736.80px;top:824.25px;width:30px;height:30px;border-radius:50%;background:#10b981"></div><svg class="ic" style="left:743.20px;top:830.35px" width="17.5" height="17.5" viewBox="0 0 24 24" fill="none" stroke="#fff" stroke-width="1.9" stroke-linecap="round" stroke-linejoin="round" ><path d="M7 17 17 7"/><path d="M7.5 7h9.5v9.5"/></svg><div style="position:absolute;left:21px;top:857.50px;width:769px;height:1px;background:#e5e9f0"></div><div style="position:absolute;left:24.75px;top:870.49px;font-size:10px;line-height:13px;font-weight:400;color:#364153;white-space:nowrap;">Linda Hudson</div><div style="position:absolute;left:130.50px;top:870.49px;font-size:10px;line-height:13px;font-weight:400;color:#364153;white-space:nowrap;">Room to rent within cheerful house with garden</div><div style="position:absolute;left:505.50px;top:870.49px;font-size:10px;line-height:13px;font-weight:400;color:#364153;white-space:nowrap;">Sep 30, 2025</div><div style="position:absolute;left:129.40px;width:600px;text-align:right;top:870.49px;font-size:10px;line-height:13px;font-weight:400;color:#364153;white-space:nowrap;">8</div><div style="position:absolute;left:736.80px;top:861.75px;width:30px;height:30px;border-radius:50%;background:#10b981"></div><svg class="ic" style="left:743.20px;top:867.85px" width="17.5" height="17.5" viewBox="0 0 24 24" fill="none" stroke="#fff" stroke-width="1.9" stroke-linecap="round" stroke-linejoin="round" ><path d="M7 17 17 7"/><path d="M7.5 7h9.5v9.5"/></svg><div style="position:absolute;left:21px;top:895.00px;width:769px;height:1px;background:#e5e9f0"></div><div style="position:absolute;left:810.20px;top:503.35px;font-size:14.3px;line-height:19px;font-weight:700;color:#101828;white-space:nowrap;">Expiring Contracts</div><svg class="ic" style="left:1187.30px;top:561.60px" width="15" height="15" viewBox="0 0 24 24" fill="none" stroke="#56637a" stroke-width="1.75" stroke-linecap="round" stroke-linejoin="round" ><path d="M14.5 2.5H7a2 2 0 0 0-2 2v15a2 2 0 0 0 2 2h10a2 2 0 0 0 2-2V7Z"/><path d="M14 2.5v3.5a1.5 1.5 0 0 0 1.5 1.5H19"/></svg><div style="position:absolute;left:894.50px;width:600px;text-align:center;top:583.55px;font-size:13.7px;line-height:18px;font-weight:400;color:#6a7282;white-space:nowrap;">No expiring contracts</div><div style="position:absolute;left:500.00px;width:600px;text-align:center;top:960.08px;font-size:11.6px;line-height:15px;font-weight:400;color:#6b7280;white-space:nowrap;">© 2025 Tracknest | Management. All Rights Reserved.</div>
</body></html>
